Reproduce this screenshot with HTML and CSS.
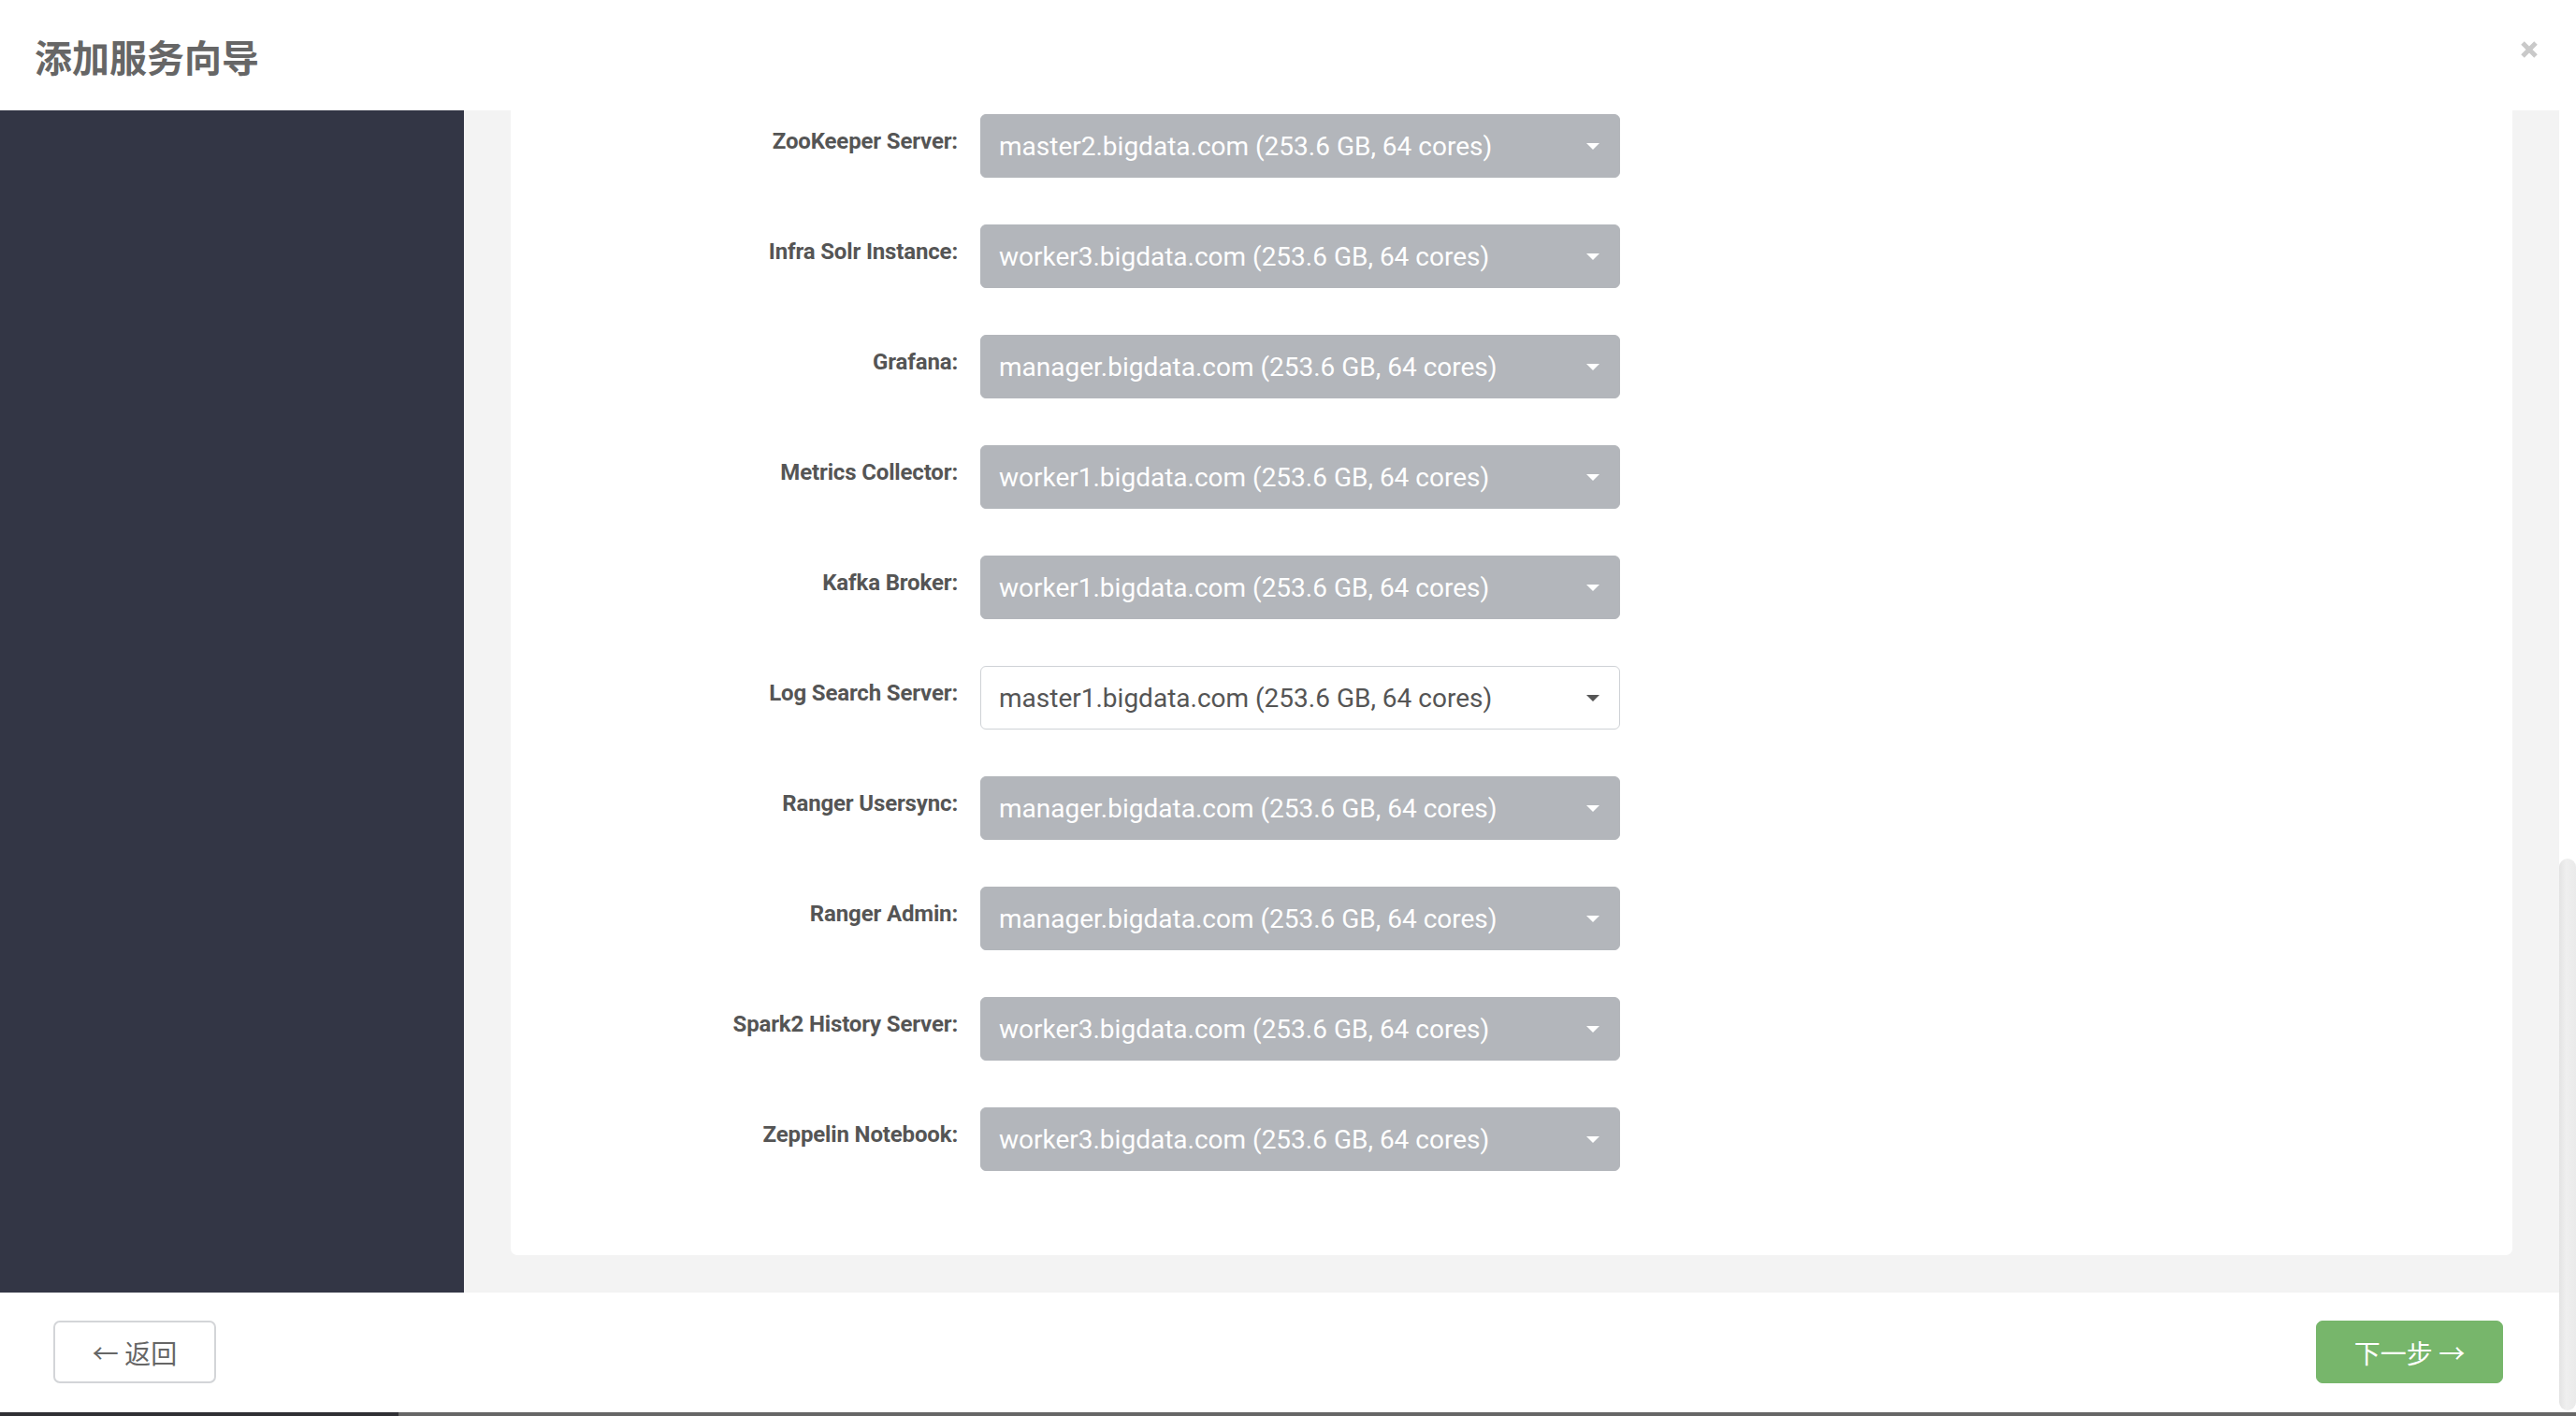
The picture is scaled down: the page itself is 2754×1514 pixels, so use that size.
FILE: index.html
```html
<!DOCTYPE html>
<html lang="zh-CN">
<head>
<meta charset="utf-8">
<title>添加服务向导</title>
<link rel="stylesheet" href="styles.css">
</head>
<body>
<div class="modal">
  <header class="modal-header">
    <h1 class="title">添加服务向导</h1>
    <span class="close" aria-label="close">
      <svg width="20" height="20" viewBox="0 0 20 20"><path d="M3 3 L17 17 M17 3 L3 17" stroke="#c9c9c9" stroke-width="5" stroke-linecap="butt"/></svg>
    </span>
  </header>
  <div class="modal-body">
    <aside class="sidebar"></aside>
    <main class="main">
      <section class="card">
        <div class="row"><label class="label">ZooKeeper Server:</label><div class="select disabled"><span>master2.bigdata.com (253.6 GB, 64 cores)</span><i class="caret"></i></div></div>
        <div class="row"><label class="label">Infra Solr Instance:</label><div class="select disabled"><span>worker3.bigdata.com (253.6 GB, 64 cores)</span><i class="caret"></i></div></div>
        <div class="row"><label class="label">Grafana:</label><div class="select disabled"><span>manager.bigdata.com (253.6 GB, 64 cores)</span><i class="caret"></i></div></div>
        <div class="row"><label class="label">Metrics Collector:</label><div class="select disabled"><span>worker1.bigdata.com (253.6 GB, 64 cores)</span><i class="caret"></i></div></div>
        <div class="row"><label class="label">Kafka Broker:</label><div class="select disabled"><span>worker1.bigdata.com (253.6 GB, 64 cores)</span><i class="caret"></i></div></div>
        <div class="row"><label class="label">Log Search Server:</label><div class="select enabled"><span>master1.bigdata.com (253.6 GB, 64 cores)</span><i class="caret"></i></div></div>
        <div class="row"><label class="label">Ranger Usersync:</label><div class="select disabled"><span>manager.bigdata.com (253.6 GB, 64 cores)</span><i class="caret"></i></div></div>
        <div class="row"><label class="label">Ranger Admin:</label><div class="select disabled"><span>manager.bigdata.com (253.6 GB, 64 cores)</span><i class="caret"></i></div></div>
        <div class="row"><label class="label">Spark2 History Server:</label><div class="select disabled"><span>worker3.bigdata.com (253.6 GB, 64 cores)</span><i class="caret"></i></div></div>
        <div class="row"><label class="label">Zeppelin Notebook:</label><div class="select disabled"><span>worker3.bigdata.com (253.6 GB, 64 cores)</span><i class="caret"></i></div></div>
      </section>
    </main>
    <div class="track"></div>
  </div>
  <footer class="modal-footer">
    <button class="btn btn-back">← 返回</button>
    <button class="btn btn-next">下一步 →</button>
  </footer>
  <div class="bottom-strip"><div class="strip-dark"></div></div>
  <div class="scroll-thumb"></div>
</div>
</body>
</html>
```

FILE: styles.css
```css
html, body {
  margin: 0;
  padding: 0;
  height: 100%;
  overflow: hidden;
  background: #ffffff;
}

.modal {
  position: relative;
  width: 2754px;
  height: 1514px;
  display: flex;
  flex-direction: column;
  font-family: Roboto, "Noto Sans CJK SC", "Liberation Sans", sans-serif;
}

.modal-header {
  height: 118px;
  flex: 0 0 118px;
  display: flex;
  align-items: center;
  justify-content: space-between;
  padding: 0 40px 0 37px;
  box-sizing: border-box;
  background: #fff;
}

.title {
  margin: 0;
  margin-top: 2px;
  font-family: "Noto Sans CJK SC", sans-serif;
  font-size: 40px;
  font-weight: 700;
  color: #666;
  letter-spacing: 0;
}

.close {
  display: flex;
  margin-top: -12px;
}

.modal-body {
  flex: 0 0 1264px;
  height: 1264px;
  display: flex;
}

.sidebar {
  width: 496px;
  flex: 0 0 496px;
  background: #333645;
}

.main {
  flex: 1;
  background: #f3f3f3;
  padding: 0 50px 40px 50px;
  overflow: hidden;
}

.track {
  width: 18px;
  flex: 0 0 18px;
  background: #fff;
}

.card {
  background: #fff;
  border-radius: 0 0 7px 7px;
  padding: 4px 0 90px 0;
  display: flex;
  flex-direction: column;
  gap: 50px;
}

.row {
  display: flex;
  align-items: flex-start;
  gap: 24px;
}

.label {
  width: 478px;
  flex: 0 0 478px;
  text-align: right;
  font-family: Roboto, sans-serif;
  font-weight: 700;
  font-size: 24px;
  line-height: 34px;
  padding-top: 12px;
  color: #555;
  letter-spacing: -0.15px;
}

.select {
  width: 684px;
  height: 68px;
  box-sizing: border-box;
  border-radius: 6px;
  display: flex;
  justify-content: space-between;
  align-items: flex-start;
  padding: 14px 21px 12px 19px;
  font-family: Roboto, sans-serif;
  font-size: 28px;
  line-height: 40px;
}

.select.disabled {
  background: #b3b6bb;
  border: 1px solid #b3b6bb;
  color: #fff;
}

.select.enabled {
  background: #fff;
  border: 1px solid #cfd2d6;
  color: #555;
}

.caret {
  display: block;
  width: 0;
  height: 0;
  margin-top: 16px;
  border-left: 7px solid transparent;
  border-right: 7px solid transparent;
  border-top: 7px solid #fff;
}

.select.enabled .caret {
  border-top-color: #555;
}

.modal-footer {
  flex: 0 0 128px;
  height: 128px;
  box-sizing: border-box;
  display: flex;
  justify-content: space-between;
  align-items: flex-start;
  padding: 30px 78px 0 57px;
  background: #fff;
}

.btn {
  height: 67px;
  border-radius: 7px;
  font-family: "Noto Sans CJK SC", sans-serif;
  font-size: 28px;
  line-height: 1;
  cursor: pointer;
  display: flex;
  align-items: center;
  justify-content: center;
  padding: 0;
}

.btn-back {
  width: 174px;
  background: #fff;
  border: 2px solid #d3d5d8;
  color: #666;
}

.btn-next {
  width: 200px;
  background: #77b66b;
  border: 1px solid #77b66b;
  color: #fff;
}

.bottom-strip {
  flex: 0 0 4px;
  height: 4px;
  background: #666666;
  display: flex;
}

.strip-dark {
  width: 426px;
  background: #303034;
}

.scroll-thumb {
  position: absolute;
  left: 2736px;
  top: 918px;
  width: 18px;
  height: 590px;
  border-radius: 9px;
  background: linear-gradient(to right, #e3e3e3, #efefef 40%, #eaeaea);
}
```
